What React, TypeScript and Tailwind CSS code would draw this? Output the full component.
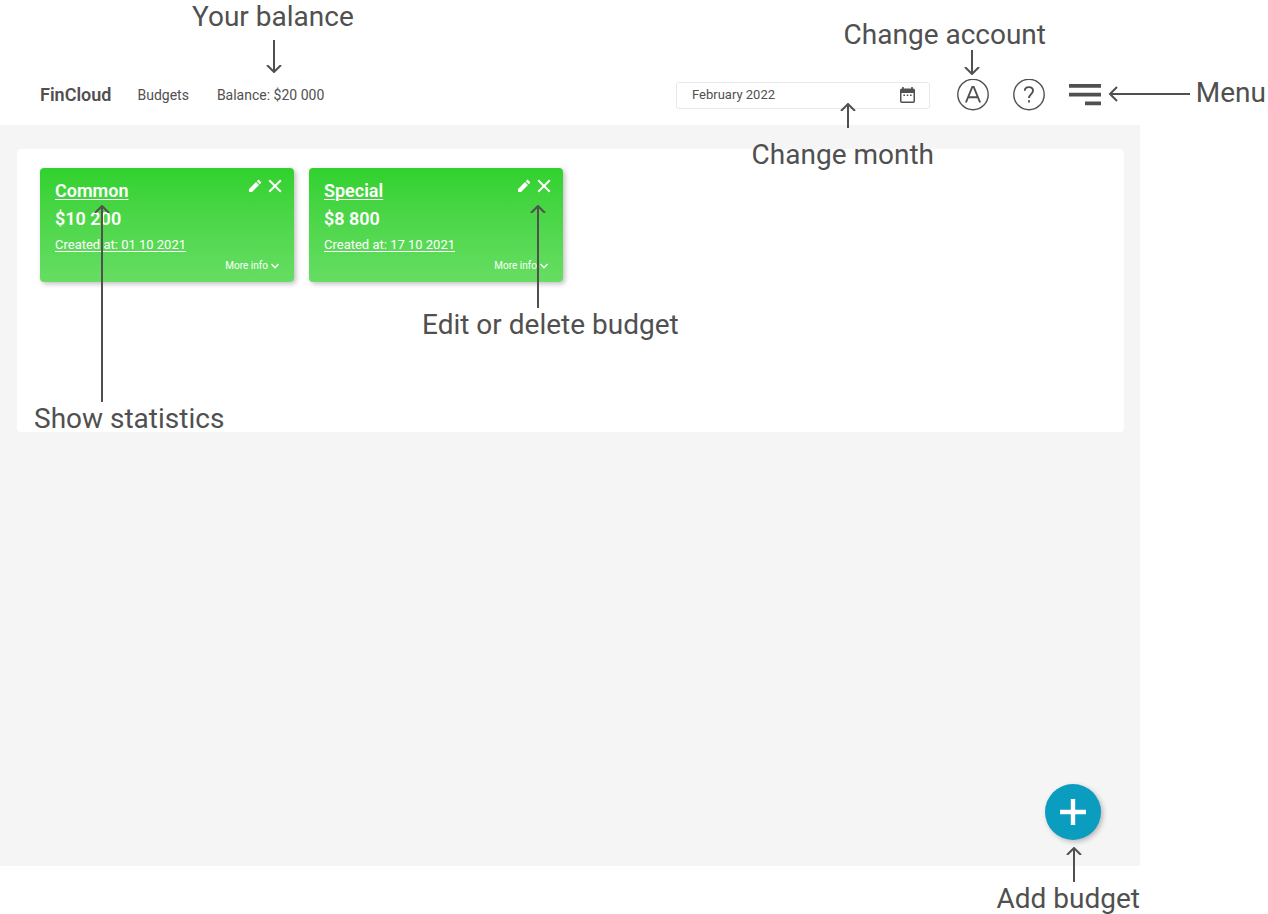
import React from "react";

type Direction = "up" | "down" | "left";

function Arrow({ direction, className }: { direction: Direction; className: string }) {
  if (direction === "left") {
    return (
      <svg className={`absolute ${className}`} viewBox="0 0 82 16" fill="none" stroke="currentColor" strokeWidth="2" aria-hidden="true">
        <path d="M82 8H2M9 1L2 8l7 7" />
      </svg>
    );
  }
  return (
    <span className={`absolute flex flex-col items-center ${direction === "down" ? "rotate-180" : ""} ${className}`}>
      <svg className="h-2 w-4 shrink-0" viewBox="0 0 16 8" fill="none" stroke="currentColor" strokeWidth="2" aria-hidden="true">
        <path d="M1 8L8 1l7 7" />
      </svg>
      <span className="-mt-1.5 w-0.5 flex-1 bg-[#505050]" />
    </span>
  );
}

function Label({ className, children }: { className: string; children: React.ReactNode }) {
  return <p className={`absolute text-[28px] leading-[34px] whitespace-nowrap ${className}`}>{children}</p>;
}

function Annotations() {
  return (
    <div className="pointer-events-none absolute inset-0 text-[#505050]">
      <Label className="top-0 left-48">Your balance</Label>
      <Arrow direction="down" className="top-10 left-[266px] h-[33px]" />

      <Label className="top-[18px] right-[222px]">Change account</Label>
      <Arrow direction="down" className="top-[50px] right-[288px] h-[25px]" />

      <Label className="top-[76px] right-0.5">Menu</Label>
      <Arrow direction="left" className="top-[86px] right-[78px] h-4 w-[82px]" />

      <Label className="top-[138px] right-[334px]">Change month</Label>
      <Arrow direction="up" className="top-[103px] right-[412px] h-[25px]" />

      <Label className="top-[308px] left-[422px]">Edit or delete budget</Label>
      <Arrow direction="up" className="top-[205px] left-[530px] h-[103px]" />

      <Label className="top-[402px] left-[34px]">Show statistics</Label>
      <Arrow direction="up" className="top-[205px] left-[94px] h-[197px]" />

      <Label className="right-32 -bottom-0.5">Add budget</Label>
      <Arrow direction="up" className="right-[186px] bottom-8 h-[35px]" />
    </div>
  );
}

function CalendarIcon() {
  return (
    <svg className="h-4 w-[15px]" viewBox="0 0 15 16" fill="none" aria-hidden="true">
      <path d="M3 0v3M12 0v3" stroke="currentColor" strokeWidth="1.6" />
      <rect x=".75" y="2.2" width="13.5" height="13" rx="1" stroke="currentColor" strokeWidth="1.5" />
      <path d="M1 2h13v4H1z" fill="currentColor" />
      <path d="M3.4 8.2H5M6.7 8.2h1.6M10 8.2h1.6" stroke="currentColor" strokeWidth="1.4" />
    </svg>
  );
}

function Header() {
  return (
    <header className="flex items-center pt-[79px] pr-[39px] pb-3.5 pl-10">
      <a href="#home" className="text-lg leading-6 font-semibold">FinCloud</a>
      <nav className="ml-[26px] flex items-center gap-7 text-sm">
        <a href="#budgets">Budgets</a>
        <a href="#balance">Balance: $20 000</a>
      </nav>
      <div className="ml-auto flex h-[27px] w-[254px] items-center rounded-[3px] border border-[#e8e8e8] pr-3.5 pl-[15px]">
        <input aria-label="Month" defaultValue="February 2022" className="min-w-0 flex-1 text-[13px] leading-5 outline-none" />
        <button type="button" aria-label="Choose month">
          <CalendarIcon />
        </button>
      </div>
      <button type="button" aria-label="Change account" className="ml-[27px]">
        <svg className="size-8" viewBox="0 0 32 32" fill="none" stroke="currentColor" aria-hidden="true">
          <circle cx="16" cy="15.500" r="15.200" strokeWidth="1.400" />
          <path d="M8.900 23.500L15.300 7.900h1.400l6.400 15.600M11.300 18.200h9.400" strokeWidth="1.900" />
        </svg>
      </button>
      <button type="button" aria-label="Help" className="mx-6">
        <svg className="size-8" viewBox="0 0 32 32" fill="none" stroke="currentColor" aria-hidden="true">
          <circle cx="16" cy="15.500" r="15.200" strokeWidth="1.400" />
          <path d="M11.800 11.800c0-2.500 1.600-3.700 4.100-3.700s4.100 1.300 4.100 3.700c0 3.200-4 3.600-4 7.200M16 21.200v2.300" strokeWidth="1.900" />
        </svg>
      </button>
      <button type="button" aria-label="Menu">
        <svg className="h-[22px] w-8" viewBox="0 0 32 22" fill="currentColor" aria-hidden="true">
          <path d="M0 0h32v3.700H0zM0 8.800h32v3.700H0zM16 17.600h16v3.700H16z" />
        </svg>
      </button>
    </header>
  );
}

type Budget = { name: string; amount: string; created: string };

const budgets: Budget[] = [
  { name: "Common", amount: "$10 200", created: "01 10 2021" },
  { name: "Special", amount: "$8 800", created: "17 10 2021" },
];

function BudgetCard({ name, amount, created }: Budget) {
  return (
    <article className="flex h-[114px] w-[254px] flex-col rounded bg-linear-to-b from-[#30d12d] to-[#66dd63] px-[15px] py-2.5 text-white shadow-[2px_2px_5px_rgba(0,0,0,0.25)]">
      <div className="flex items-start justify-between">
        <h2 className="text-lg leading-[26px] font-semibold">
          <a href={`#${name}`} className="underline decoration-1 underline-offset-2">{name}</a>
        </h2>
        <div className="-mr-1 flex items-center gap-1">
          <button type="button" aria-label={`Edit ${name}`}>
            <svg className="size-4" viewBox="0 0 16 16" fill="currentColor" aria-hidden="true">
              <path d="M2 14v-3l7-7 3 3-7 7zM9.800 3.200l1-1c.5-.5 1-.5 1.500 0l1.500 1.500c.5.5.5 1 0 1.500l-1 1z" />
            </svg>
          </button>
          <button type="button" aria-label={`Delete ${name}`}>
            <svg className="size-4" viewBox="0 0 16 16" fill="none" stroke="currentColor" strokeWidth="2" aria-hidden="true">
              <path d="M2.200 2.200l11.600 11.600M13.800 2.200L2.200 13.800" />
            </svg>
          </button>
        </div>
      </div>
      <p className="mt-0.5 text-lg leading-[26px] font-semibold">{amount}</p>
      <p className="text-[13px] leading-[26px] underline decoration-1 underline-offset-2">Created at: {created}</p>
      <button type="button" className="mt-auto flex items-center gap-[3px] self-end text-[10px] leading-3">
        More info
        <svg className="h-1.5 w-2" viewBox="0 0 8 6" fill="none" stroke="currentColor" strokeWidth="1.3" aria-hidden="true">
          <path d="M.5 1L4 4.800 7.500 1" />
        </svg>
      </button>
    </article>
  );
}

export default function App() {
  return (
    <div className="relative flex min-h-screen flex-col bg-white pr-32 pb-12 font-['Roboto',sans-serif] text-[#505050]">
      <Header />
      <main className="flex flex-1 flex-col bg-[#f5f5f5] pt-6 pr-4 pb-[26px] pl-[17px]">
        <section className="flex min-h-[283px] flex-wrap content-start gap-[15px] rounded bg-white px-[23px] py-[19px]">
          {budgets.map((budget) => (
            <BudgetCard key={budget.name} {...budget} />
          ))}
        </section>
        <button
          type="button"
          aria-label="Add budget"
          className="mt-auto mr-[23px] flex size-14 items-center justify-center self-end rounded-full bg-[#0a9dc0] text-white shadow-[2px_2px_5px_rgba(0,0,0,0.25)]"
        >
          <svg className="size-[26px]" viewBox="0 0 26 26" fill="currentColor" aria-hidden="true">
            <path d="M10.800 0h4.400v10.800H26v4.400H15.200V26h-4.400V15.200H0v-4.400h10.800z" />
          </svg>
        </button>
      </main>
      <Annotations />
    </div>
  );
}
